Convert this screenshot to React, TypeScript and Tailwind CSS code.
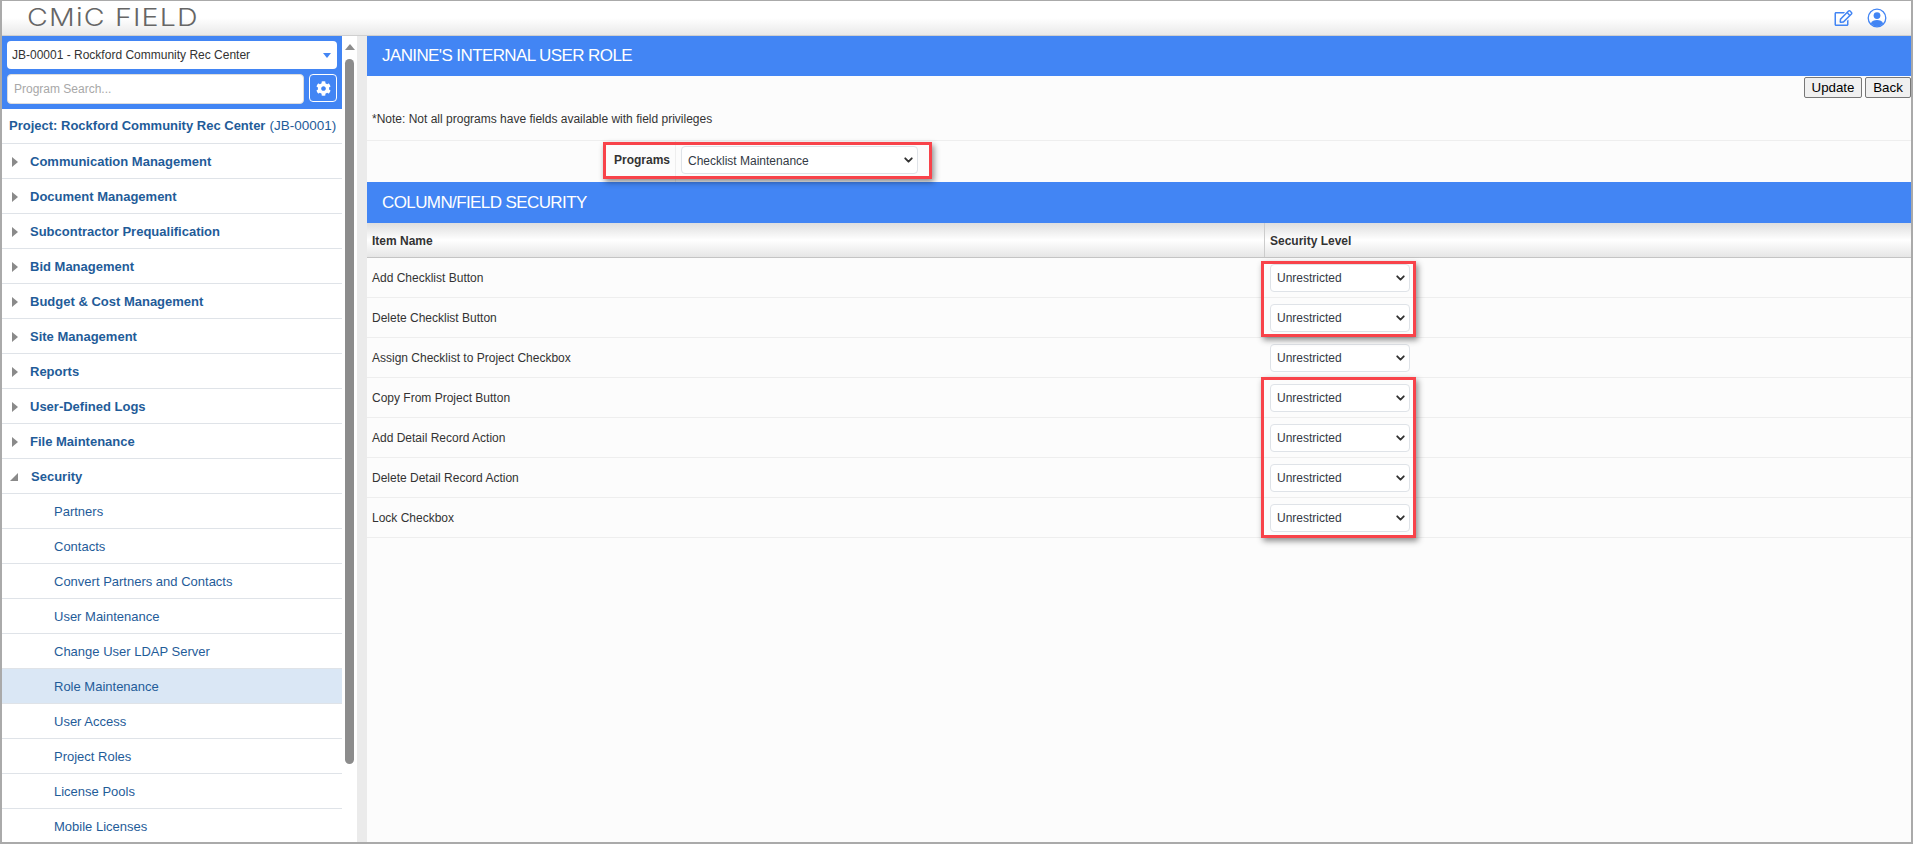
import { ChevronDown } from "lucide-react";
import { FaCog, FaRegEdit } from "react-icons/fa";

const SECTIONS = [
  "Communication Management",
  "Document Management",
  "Subcontractor Prequalification",
  "Bid Management",
  "Budget & Cost Management",
  "Site Management",
  "Reports",
  "User-Defined Logs",
  "File Maintenance",
];

const SECURITY_ITEMS = [
  "Partners",
  "Contacts",
  "Convert Partners and Contacts",
  "User Maintenance",
  "Change User LDAP Server",
  "Role Maintenance",
  "User Access",
  "Project Roles",
  "License Pools",
  "Mobile Licenses",
];

const FIELDS = [
  "Add Checklist Button",
  "Delete Checklist Button",
  "Assign Checklist to Project Checkbox",
  "Copy From Project Button",
  "Add Detail Record Action",
  "Delete Detail Record Action",
  "Lock Checkbox",
];

function FakeSelect({ label, className }: { label: string; className: string }) {
  return (
    <div className={`relative flex items-center bg-white border border-[#dfe3e8] rounded-[4px] pl-[6px] pt-[1px] text-[12px] font-normal text-[#333a45] ${className}`}>
      {label}
      <ChevronDown className="absolute right-[2px] top-1/2 -translate-y-1/2 w-[13px] h-[13px] text-[#333]" strokeWidth={3.5} />
    </div>
  );
}

function Sidebar() {
  return (
    <aside className="w-[340px] shrink-0 bg-white">
      <div className="bg-[#4285f4] h-[73px] px-[5px] pt-[5px] flex flex-col gap-[5px]">
        <div className="relative h-[28px] bg-white rounded-[4px] flex items-center pl-[5px] text-[12px] text-[#333]">
          JB-00001 - Rockford Community Rec Center
          <span className="absolute right-[6px] top-[12px] w-0 h-0 border-x-[4px] border-x-transparent border-t-[5px] border-t-[#4285f4]" />
        </div>
        <div className="flex gap-[5px]">
          <div className="w-[297px] h-[30px] bg-white rounded-[4px] border border-[#ddd] flex items-center pl-[6px] text-[12px] text-[#a8a8a8]">
            Program Search...
          </div>
          <div className="w-[28px] h-[28px] rounded-[4px] border border-white flex items-center justify-center">
            <FaCog className="w-[15px] h-[15px] text-white" />
          </div>
        </div>
      </div>
      <div className="h-[35px] border-b border-[#dfe3e8] flex items-center pl-[7px] text-[13px] text-[#1f5c99] whitespace-nowrap">
        <span className="font-bold">Project: Rockford Community Rec Center</span>
        <span className="ml-[4px] text-[13.5px] font-normal">(JB-00001)</span>
      </div>
      {SECTIONS.map((name) => (
        <div key={name} className="h-[35px] pt-[1px] border-b border-[#dfe3e8] flex items-center text-[13px] font-bold text-[#1f5c99]">
          <span className="ml-[10px] mr-[12px] w-0 h-0 border-y-[5px] border-y-transparent border-l-[6px] border-l-[#8a8a8a]" />
          {name}
        </div>
      ))}
      <div className="h-[35px] pt-[1px] border-b border-[#dfe3e8] flex items-center text-[13px] font-bold text-[#1f5c99]">
        <span className="ml-[8px] mr-[13px] w-0 h-0 border-b-[8px] border-b-[#8a8a8a] border-l-[8px] border-l-transparent" />
        Security
      </div>
      {SECURITY_ITEMS.map((name) => (
        <div
          key={name}
          className={`h-[35px] pt-[1px] border-b border-[#dfe3e8] flex items-center pl-[52px] text-[13px] text-[#1f5c99] ${name === "Role Maintenance" ? "bg-[#dae7f5]" : ""}`}
        >
          {name}
        </div>
      ))}
    </aside>
  );
}

function Scrollbar() {
  return (
    <div className="w-[15px] shrink-0 bg-white flex flex-col items-center">
      <span className="mt-[8px] w-0 h-0 border-x-[5px] border-x-transparent border-b-[6px] border-b-[#8c8c8c]" />
      <div className="mt-[9px] w-[9px] h-[705px] rounded-[5px] bg-[#8c8c8c]" />
    </div>
  );
}

export default function App() {
  return (
    <div className="relative w-[1913px] h-[844px] overflow-hidden bg-[#fcfcfc] border-[2px] border-t-[1px] border-[#aaaaaa] font-['Liberation_Sans',Arial,sans-serif] text-[#333] flex flex-col">
      <header className="h-[35px] shrink-0 bg-gradient-to-b from-white via-white to-[#e9e9e9] border-b border-[#cfcfcf] flex items-center justify-between pr-[24px]">
        <span className="ml-[25px] text-[24px] leading-none font-['Inter',sans-serif] font-light tracking-[1px] text-[#666] origin-left scale-x-[1.19]">CMiC FIELD</span>
        <div className="flex items-center gap-[14px]">
          <FaRegEdit className="w-[19px] h-[16px] text-[#4285f4]" />
          <svg viewBox="0 0 20 20" className="w-[20px] h-[20px]" fill="#4285f4">
            <circle cx="10" cy="10" r="8.8" fill="none" stroke="#4285f4" strokeWidth="1.3" />
            <circle cx="10" cy="7.6" r="3.4" />
            <path d="M3.8 15.6c1-2.8 3.4-3.6 6.2-3.6s5.2.8 6.2 3.6A8.4 8.4 0 0110 18.4a8.4 8.4 0 01-6.2-2.8z" />
          </svg>
        </div>
      </header>

      <div className="flex-1 flex min-h-0">
        <Sidebar />
        <Scrollbar />
        <div className="w-[10px] shrink-0 bg-[#ebebeb]" />
        <main className="flex-1 min-w-0">
          <div className="h-[40px] bg-[#4285f4] flex items-center pl-[15px] text-[17px] tracking-[-0.6px] text-white">JANINE'S INTERNAL USER ROLE</div>
          <div className="h-[65px] border-b border-[#eeeeee] relative">
            <div className="absolute right-0 top-[1px] flex gap-[3px]">
              <button className="w-[58px] h-[21px] bg-[#f0f0f0] border border-[#777] rounded-[2px] text-[13.33px] text-black">Update</button>
              <button className="w-[46px] h-[21px] bg-[#f0f0f0] border border-[#777] rounded-[2px] text-[13.33px] text-black">Back</button>
            </div>
            <div className="absolute left-[5px] top-[34px] text-[12px] text-[#333]">*Note: Not all programs have fields available with field privileges</div>
          </div>
          <div className="h-[41px] flex">
            <div className="w-[247px] shrink-0 h-full" />
            <div className="w-[62px] h-full flex items-center justify-end pr-[5px] pb-[3px] text-[12px] font-bold border-r border-[#eeeeee]">Programs</div>
            <FakeSelect label="Checklist Maintenance" className="ml-[5px] mt-[5px] w-[237px] h-[28px]" />
          </div>
          <div className="h-[41px] bg-[#4285f4] flex items-center pl-[15px] text-[17px] tracking-[-0.6px] text-white">COLUMN/FIELD SECURITY</div>
          <div className="h-[35px] flex bg-gradient-to-b from-[#dedede] via-white to-[#e6e6e6] border-b border-[#c4c4c4] text-[12px] font-bold">
            <div className="w-[898px] shrink-0 flex items-center pl-[5px] pt-[2px] border-r border-[#cccccc]">Item Name</div>
            <div className="flex-1 flex items-center pl-[5px] pt-[2px]">Security Level</div>
          </div>
          {FIELDS.map((name) => (
            <div key={name} className="h-[40px] flex border-b border-[#eeeeee] text-[12px]">
              <div className="w-[898px] shrink-0 flex items-center pl-[5px]">{name}</div>
              <div className="flex-1 flex items-center pl-[5px]">
                <FakeSelect label="Unrestricted" className="w-[140px] h-[28px]" />
              </div>
            </div>
          ))}
        </main>
      </div>

      {/* red callouts drawn over the screen */}
      <div className="absolute left-[601px] top-[141px] w-[329px] h-[37px] border-[3px] border-[#f8434a] shadow-[2px_3px_6px_rgba(0,0,0,0.45)] pointer-events-none" />
      <div className="absolute left-[1259px] top-[260px] w-[155px] h-[76px] border-[3px] border-[#f8434a] shadow-[2px_3px_6px_rgba(0,0,0,0.45)] pointer-events-none" />
      <div className="absolute left-[1259px] top-[376px] w-[155px] h-[161px] border-[3px] border-[#f8434a] shadow-[2px_3px_6px_rgba(0,0,0,0.45)] pointer-events-none" />
    </div>
  );
}
